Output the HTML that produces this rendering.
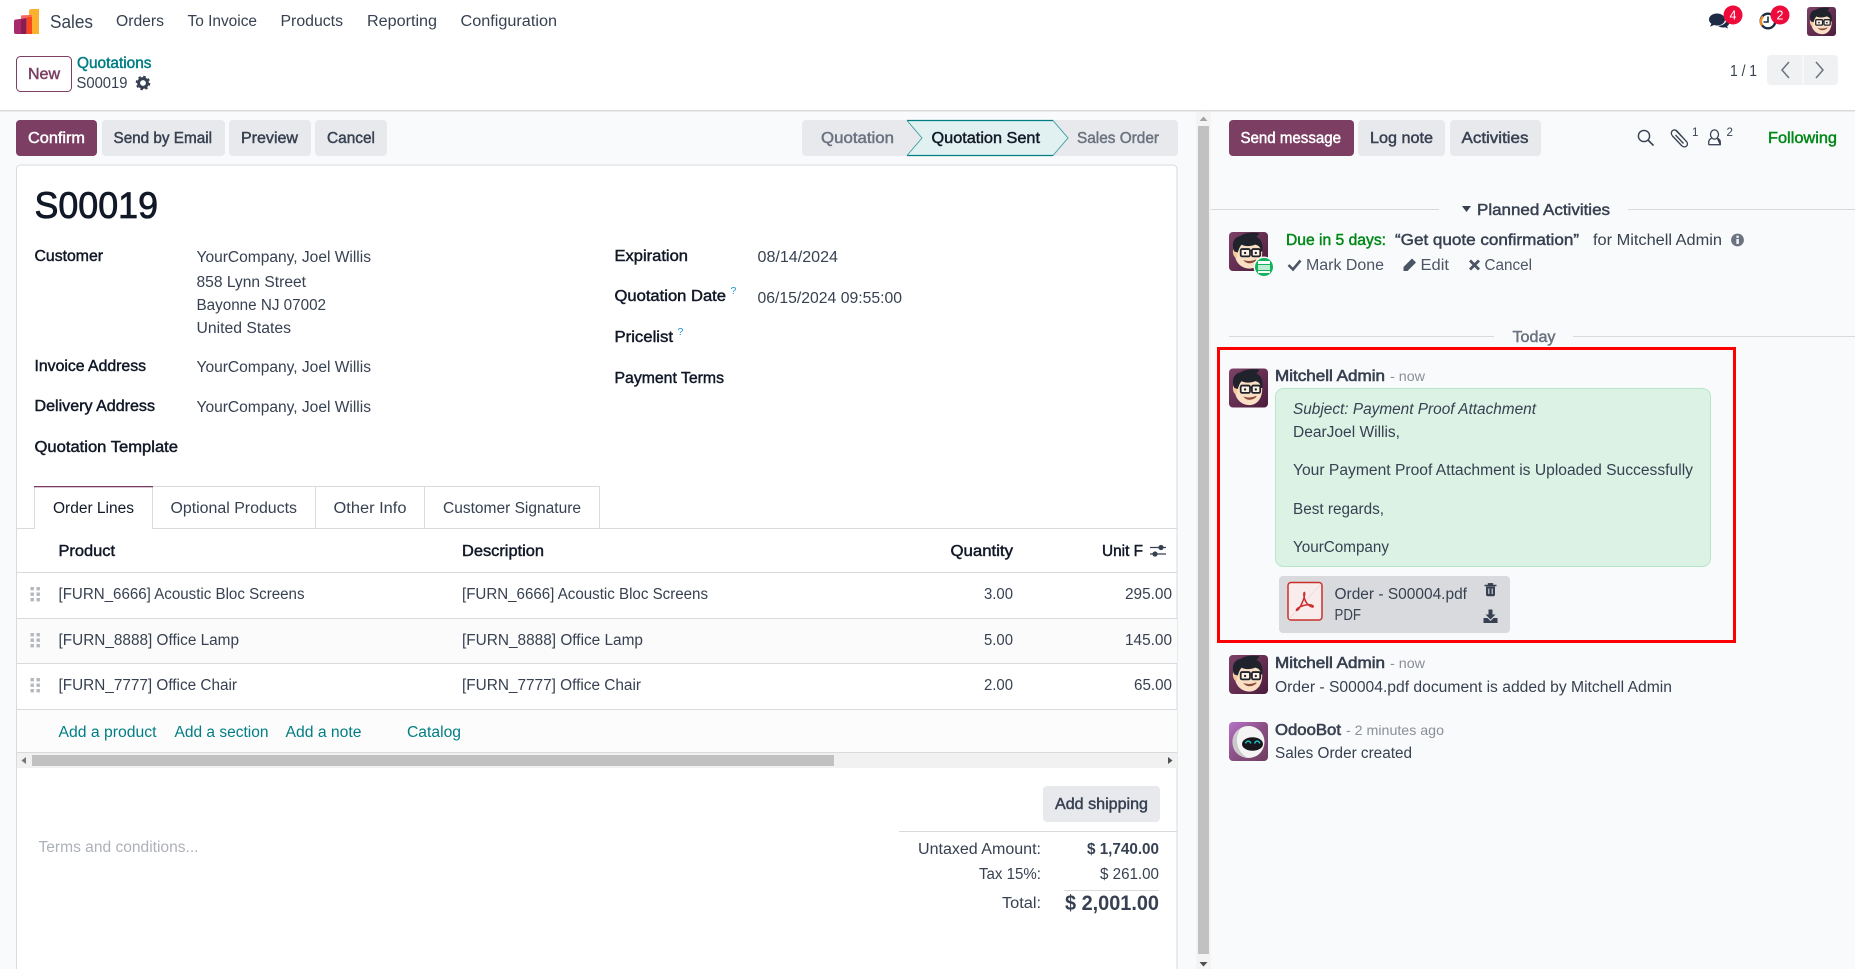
<!DOCTYPE html>
<html lang="en"><head><meta charset="utf-8"><title>S00019 - Sales</title>
<style>
html,body{margin:0;padding:0;width:1855px;height:969px;overflow:hidden;background:#f9fafb}
svg{display:block}
text{font-family:"Liberation Sans",sans-serif;font-size:15.4px;fill:currentColor;color:#374151;white-space:pre}
.m{stroke:currentColor;stroke-width:.45px}
.d{color:#111827}
.g{color:#6b7280}
.t{color:#017e84}
.w{color:#fff}
.gr{color:#008818}
.mu{color:#8b8f98}
</style></head><body>
<svg xmlns="http://www.w3.org/2000/svg" width="1855" height="969" viewBox="0 0 1855 969">
<defs>
<linearGradient id="av" x1="0" y1="0" x2="1" y2="1"><stop offset="0" stop-color="#7d4168"/><stop offset="1" stop-color="#4c1c3c"/></linearGradient>
<linearGradient id="ob" x1="0" y1="0" x2="1" y2="1"><stop offset="0" stop-color="#b673c8"/><stop offset=".5" stop-color="#8a4f84"/><stop offset="1" stop-color="#6e3f60"/></linearGradient>
<symbol id="face" viewBox="0 0 40 40">
<rect width="40" height="40" rx="4" fill="url(#av)"/>
<path d="M6 20C5 30 12 37.500 21 37.500C29 37.500 34.500 30 34 20L32 12L10 12Z" fill="#f9dfc4"/>
<path d="M5 17C3 19 4 26 8 27L9 19Z" fill="#f3c9a0"/>
<path d="M5.500 20C2 12 5 5 12 4C15 1 24 0 31 1C30 3 30 4 28 5C33 7 35.500 13 34 20L32.500 20C32.500 15 30 14 27 13C22 15 16 15 13 13C11 15 10 18 9 21Z" fill="#20232b"/>
<rect x="12" y="17.500" width="9.500" height="7.500" rx="1.500" fill="#fff" fill-opacity=".55" stroke="#20232b" stroke-width="1.800"/>
<rect x="23.500" y="17.500" width="8.500" height="7.500" rx="1.500" fill="#fff" fill-opacity=".55" stroke="#20232b" stroke-width="1.800"/>
<path d="M21.500 19.500H23.500" stroke="#20232b" stroke-width="1.500"/>
<circle cx="16.500" cy="21.500" r="1.200" fill="#20232b"/><circle cx="27.500" cy="21.500" r="1.200" fill="#20232b"/>
<path d="M16 29.500C19 32.500 24 32.500 28 28.500C24 30.500 20 30.500 16 29.500Z" fill="#8a4a3a" stroke="#8a4a3a" stroke-width=".9"/>
</symbol>
</defs>

<!-- top white area -->
<rect width="1855" height="110" fill="#fff"/>
<rect y="110" width="1855" height="1.500" fill="#d8dadd"/>

<!-- logo -->
<path d="M29 11.500Q29 9 31.500 9H39V34H31.500Q29 34 29 31.500Z" fill="#fbb130"/>
<path d="M21 15.500Q25 15 32 15V34H21Z" fill="#f9695e"/>
<path d="M27 17H32V34H27Z" fill="#f9461c"/>
<path d="M14 21.500Q14 19.500 16 19.500L26.500 18V34H16Q14 34 14 32Z" fill="#a8296c"/>
<path d="M21 20V34H26.500V18Z" fill="#8a1c4f"/>

<!-- nav -->
<text x="50" y="28" textLength="43" lengthAdjust="spacingAndGlyphs" style="font-size:18.500px">Sales</text>
<text x="116" y="26" textLength="48" lengthAdjust="spacingAndGlyphs">Orders</text>
<text x="187.500" y="26" textLength="69.500" lengthAdjust="spacingAndGlyphs">To Invoice</text>
<text x="280.500" y="26" textLength="62.500" lengthAdjust="spacingAndGlyphs">Products</text>
<text x="367" y="26" textLength="70" lengthAdjust="spacingAndGlyphs">Reporting</text>
<text x="460.500" y="26" textLength="96.500" lengthAdjust="spacingAndGlyphs">Configuration</text>

<!-- systray -->
<path d="M1717 13.500c-4.500 0-8 2.700-8 6 0 1.700.9 3.200 2.400 4.300l-1.400 3 4-1.800c1 .3 2 .5 3 .5 4.500 0 8-2.700 8-6s-3.500-6-8-6z" fill="#1d2b45"/>
<path d="M1727 19c-.3 3.700-4 6.700-9 6.900 1.200 1 2.900 1.600 4.800 1.600.8 0 1.600-.1 2.300-.3l2.900 1.300-.9-2.300c1.500-1 2.400-2.400 2.400-4 0-1-.9-2-2.500-3.200z" fill="#1d2b45"/>
<circle cx="1733" cy="15" r="9.500" fill="#ef0a3c"/>
<text x="1733" y="19.500" text-anchor="middle" class="w" style="font-size:12.500px">4</text>
<circle cx="1768" cy="21" r="7.300" fill="none" stroke="#1d2b45" stroke-width="2.400"/>
<path d="M1763 16.500a7.300 7.300 0 0 0-1 9" fill="none" stroke="#e8902c" stroke-width="2.400"/>
<path d="M1768 16.500V22H1763.500" fill="none" stroke="#1d2b45" stroke-width="1.600"/>
<circle cx="1780" cy="15" r="9.500" fill="#ef0a3c"/>
<text x="1780" y="19.500" text-anchor="middle" class="w" style="font-size:12.500px">2</text>
<use href="#face" x="1807" y="7" width="29" height="29"/>

<!-- control panel left -->
<rect x="16.500" y="56.500" width="55" height="35" rx="4" fill="#fff" stroke="#7c3e63"/>
<text x="28" y="79" textLength="32" lengthAdjust="spacingAndGlyphs" class="m" style="color:#7c3e63">New</text>
<text x="77" y="68" textLength="74.500" lengthAdjust="spacingAndGlyphs" class="m t">Quotations</text>
<text x="76.500" y="88" textLength="51" lengthAdjust="spacingAndGlyphs">S00019</text>
<g transform="translate(143 83)" fill="#374151">
<circle r="4.400" fill="none" stroke="#374151" stroke-width="3"/>
<circle r="6.200" fill="none" stroke="#374151" stroke-width="2.200" stroke-dasharray="2.500 2.370"/>
</g>

<!-- pager -->
<text x="1730" y="76" textLength="27" lengthAdjust="spacingAndGlyphs">1 / 1</text>
<rect x="1767" y="55" width="71" height="30" rx="4" fill="#f0f1f3"/>
<rect x="1802.500" y="55" width="1" height="30" fill="#fff"/>
<path d="M1789 62l-7 8 7 8M1816 62l7 8-7 8" fill="none" stroke="#6b7280" stroke-width="1.500"/>

<!-- action buttons -->
<rect x="16" y="120" width="81" height="36" rx="4" fill="#7c3e63"/>
<text x="28" y="143" textLength="57" lengthAdjust="spacingAndGlyphs" class="m w">Confirm</text>
<rect x="102" y="120" width="123" height="36" rx="4" fill="#e7e9ed"/>
<text x="113.500" y="143" textLength="98.500" lengthAdjust="spacingAndGlyphs" class="m">Send by Email</text>
<rect x="229" y="120" width="82" height="36" rx="4" fill="#e7e9ed"/>
<text x="241" y="143" textLength="57" lengthAdjust="spacingAndGlyphs" class="m">Preview</text>
<rect x="315" y="120" width="72" height="36" rx="4" fill="#e7e9ed"/>
<text x="327" y="143" textLength="48" lengthAdjust="spacingAndGlyphs" class="m">Cancel</text>

<!-- statusbar -->
<rect x="802" y="120" width="376" height="36" rx="4" fill="#e7e9ed"/>
<path d="M907 120.500H1053L1068 138L1053 155.500H907L922 138Z" fill="#e1f1f1"/>
<path d="M907 120.500H1053M907 155.500H1053" stroke="#017e84" stroke-width="1.300"/>
<path d="M907 120.500L922 138L907 155.500M1053 120.500L1068 138L1053 155.500" fill="none" stroke="#3a9ca0" stroke-width=".9"/>
<text x="821" y="143" textLength="73" lengthAdjust="spacingAndGlyphs" class="m g">Quotation</text>
<text x="931.500" y="143" textLength="108.500" lengthAdjust="spacingAndGlyphs" class="m d">Quotation Sent</text>
<text x="1077" y="143" textLength="82" lengthAdjust="spacingAndGlyphs" class="m g">Sales Order</text>

<!-- sheet -->
<path d="M16.500 980V169a4 4 0 0 1 4-4H1173a4 4 0 0 1 4 4V980Z" fill="#fff" stroke="#d8dadd"/>
<text x="34.500" y="218" textLength="123.500" lengthAdjust="spacingAndGlyphs" class="d" style="font-size:37.500px;stroke:currentColor;stroke-width:.8px">S00019</text>

<!-- fields -->
<text x="34.500" y="261" textLength="68.500" lengthAdjust="spacingAndGlyphs" class="m d">Customer</text>
<text x="196.500" y="262" textLength="174.500" lengthAdjust="spacingAndGlyphs">YourCompany, Joel Willis</text>
<text x="196.500" y="287" textLength="109.500" lengthAdjust="spacingAndGlyphs">858 Lynn Street</text>
<text x="196.500" y="310" textLength="129.500" lengthAdjust="spacingAndGlyphs">Bayonne NJ 07002</text>
<text x="196.500" y="333" textLength="94.500" lengthAdjust="spacingAndGlyphs">United States</text>
<text x="34.500" y="371" textLength="111.500" lengthAdjust="spacingAndGlyphs" class="m d">Invoice Address</text>
<text x="196.500" y="372" textLength="174.500" lengthAdjust="spacingAndGlyphs">YourCompany, Joel Willis</text>
<text x="34.500" y="411" textLength="120.500" lengthAdjust="spacingAndGlyphs" class="m d">Delivery Address</text>
<text x="196.500" y="412" textLength="174.500" lengthAdjust="spacingAndGlyphs">YourCompany, Joel Willis</text>
<text x="34.500" y="452" textLength="143.500" lengthAdjust="spacingAndGlyphs" class="m d">Quotation Template</text>

<text x="614.500" y="261" textLength="73.500" lengthAdjust="spacingAndGlyphs" class="m d">Expiration</text>
<text x="757.500" y="262" textLength="80.500" lengthAdjust="spacingAndGlyphs">08/14/2024</text>
<text x="614.500" y="301" textLength="111.500" lengthAdjust="spacingAndGlyphs" class="m d">Quotation Date</text>
<text x="730.500" y="294" style="font-size:10.500px;color:#1d96c4">?</text>
<text x="757.500" y="303" textLength="144.500" lengthAdjust="spacingAndGlyphs">06/15/2024 09:55:00</text>
<text x="614.500" y="342" textLength="58.500" lengthAdjust="spacingAndGlyphs" class="m d">Pricelist</text>
<text x="677.500" y="335" style="font-size:10.500px;color:#1d96c4">?</text>
<text x="614.500" y="383" textLength="109.500" lengthAdjust="spacingAndGlyphs" class="m d">Payment Terms</text>

<!-- tabs -->
<rect x="17" y="528" width="1160" height="1" fill="#d8dadd"/>
<path d="M152.500 528V486.500H599.500V528M315.500 486.500V528M424.500 486.500V528" fill="none" stroke="#d8dadd"/>
<rect x="34" y="487" width="118" height="42.500" fill="#fff"/>
<path d="M34.500 529V487M152.500 487V529" stroke="#d8dadd" fill="none"/>
<rect x="34" y="486" width="119" height="1.300" fill="#7c3e63"/>
<text x="53" y="513" textLength="81" lengthAdjust="spacingAndGlyphs" class="d">Order Lines</text>
<text x="170.500" y="513" textLength="126.500" lengthAdjust="spacingAndGlyphs">Optional Products</text>
<text x="333.500" y="513" textLength="73" lengthAdjust="spacingAndGlyphs">Other Info</text>
<text x="443" y="513" textLength="138" lengthAdjust="spacingAndGlyphs">Customer Signature</text>

<!-- table -->
<rect x="17" y="618.500" width="1160" height="44.500" fill="#fbfbfb"/>
<rect x="17" y="709.500" width="1160" height="43" fill="#fcfcfc"/>
<g fill="#d8dadd">
<rect x="17" y="572" width="1160" height="1"/>
<rect x="17" y="618" width="1160" height="1"/>
<rect x="17" y="663" width="1160" height="1"/>
<rect x="17" y="709" width="1160" height="1"/>
<rect x="17" y="752" width="1160" height="1"/>
</g>
<text x="58.500" y="556" textLength="56.500" lengthAdjust="spacingAndGlyphs" class="m d">Product</text>
<text x="462" y="556" textLength="82" lengthAdjust="spacingAndGlyphs" class="m d">Description</text>
<text x="950.500" y="556" textLength="62.500" lengthAdjust="spacingAndGlyphs" class="m d">Quantity</text>
<text x="1102" y="556" textLength="41" lengthAdjust="spacingAndGlyphs" class="m d">Unit F</text>
<path d="M1150 547.500H1166M1150 554H1166" stroke="#374151" stroke-width="1.300"/>
<circle cx="1161" cy="547.500" r="2.600" fill="#374151"/><circle cx="1155" cy="554" r="2.600" fill="#374151"/>

<g fill="#b4b7bd">
<rect x="30.500" y="587" width="3.400" height="3.400"/><rect x="36.500" y="587" width="3.400" height="3.400"/><rect x="30.500" y="592.500" width="3.400" height="3.400"/><rect x="36.500" y="592.500" width="3.400" height="3.400"/><rect x="30.500" y="598" width="3.400" height="3.400"/><rect x="36.500" y="598" width="3.400" height="3.400"/>
<rect x="30.500" y="633" width="3.400" height="3.400"/><rect x="36.500" y="633" width="3.400" height="3.400"/><rect x="30.500" y="638.500" width="3.400" height="3.400"/><rect x="36.500" y="638.500" width="3.400" height="3.400"/><rect x="30.500" y="644" width="3.400" height="3.400"/><rect x="36.500" y="644" width="3.400" height="3.400"/>
<rect x="30.500" y="678" width="3.400" height="3.400"/><rect x="36.500" y="678" width="3.400" height="3.400"/><rect x="30.500" y="683.500" width="3.400" height="3.400"/><rect x="36.500" y="683.500" width="3.400" height="3.400"/><rect x="30.500" y="689" width="3.400" height="3.400"/><rect x="36.500" y="689" width="3.400" height="3.400"/>
</g>

<text x="58.500" y="599" textLength="246" lengthAdjust="spacingAndGlyphs">[FURN_6666] Acoustic Bloc Screens</text>
<text x="462" y="599" textLength="246" lengthAdjust="spacingAndGlyphs">[FURN_6666] Acoustic Bloc Screens</text>
<text x="984" y="599" textLength="29" lengthAdjust="spacingAndGlyphs">3.00</text>
<text x="1125" y="599" textLength="47" lengthAdjust="spacingAndGlyphs">295.00</text>
<text x="58.500" y="645" textLength="180.500" lengthAdjust="spacingAndGlyphs">[FURN_8888] Office Lamp</text>
<text x="462" y="645" textLength="181" lengthAdjust="spacingAndGlyphs">[FURN_8888] Office Lamp</text>
<text x="984" y="645" textLength="29" lengthAdjust="spacingAndGlyphs">5.00</text>
<text x="1125" y="645" textLength="47" lengthAdjust="spacingAndGlyphs">145.00</text>
<text x="58.500" y="690" textLength="178.500" lengthAdjust="spacingAndGlyphs">[FURN_7777] Office Chair</text>
<text x="462" y="690" textLength="179" lengthAdjust="spacingAndGlyphs">[FURN_7777] Office Chair</text>
<text x="984" y="690" textLength="29" lengthAdjust="spacingAndGlyphs">2.00</text>
<text x="1134" y="690" textLength="38" lengthAdjust="spacingAndGlyphs">65.00</text>

<text x="58.500" y="737" textLength="98" lengthAdjust="spacingAndGlyphs" class="t">Add a product</text>
<text x="174.500" y="737" textLength="94" lengthAdjust="spacingAndGlyphs" class="t">Add a section</text>
<text x="285.500" y="737" textLength="76" lengthAdjust="spacingAndGlyphs" class="t">Add a note</text>
<text x="407" y="737" textLength="54" lengthAdjust="spacingAndGlyphs" class="t">Catalog</text>

<!-- h scrollbar -->
<rect x="17" y="753" width="1160" height="15" fill="#f1f1f1"/>
<rect x="32" y="755" width="802" height="11" fill="#c1c1c1"/>
<path d="M26 757V764L21.500 760.500Z" fill="#757575"/>
<path d="M1168 757V764L1172.500 760.500Z" fill="#505050"/>

<!-- totals -->
<rect x="1043" y="786" width="117" height="36" rx="4" fill="#e7e9ed"/>
<text x="1055" y="809" textLength="93" lengthAdjust="spacingAndGlyphs" class="m">Add shipping</text>
<rect x="899" y="831" width="278" height="1" fill="#d8dadd"/>
<text x="38.500" y="852" textLength="160" lengthAdjust="spacingAndGlyphs" style="color:#adb1b8">Terms and conditions...</text>
<text x="918" y="854" textLength="123" lengthAdjust="spacingAndGlyphs">Untaxed Amount:</text>
<text x="1087" y="854" textLength="72" lengthAdjust="spacingAndGlyphs" style="font-weight:700">$ 1,740.00</text>
<text x="979" y="879" textLength="62" lengthAdjust="spacingAndGlyphs">Tax 15%:</text>
<text x="1100" y="879" textLength="59" lengthAdjust="spacingAndGlyphs">$ 261.00</text>
<rect x="1064" y="890" width="95" height="1" fill="#d8dadd"/>
<text x="1002" y="908" textLength="39" lengthAdjust="spacingAndGlyphs">Total:</text>
<text x="1065" y="910" textLength="94" lengthAdjust="spacingAndGlyphs" style="font-size:21px;font-weight:700">$ 2,001.00</text>

<!-- v scrollbar -->
<rect x="1196" y="111.500" width="15" height="858" fill="#f4f4f5"/>
<rect x="1198" y="126" width="11" height="828" fill="#c1c1c1"/>
<path d="M1199.500 121L1203.500 116.500L1207.500 121Z" fill="#a3a3a3"/>
<path d="M1199.500 962L1203.500 966.500L1207.500 962Z" fill="#505050"/>

<!-- chatter buttons -->
<rect x="1229" y="120" width="125" height="36" rx="4" fill="#7c3e63"/>
<text x="1240.500" y="143" textLength="100.500" lengthAdjust="spacingAndGlyphs" class="m w">Send message</text>
<rect x="1358" y="120" width="87" height="36" rx="4" fill="#e7e9ed"/>
<text x="1370" y="143" textLength="63" lengthAdjust="spacingAndGlyphs" class="m">Log note</text>
<rect x="1450" y="120" width="91" height="36" rx="4" fill="#e7e9ed"/>
<text x="1461.500" y="143" textLength="67" lengthAdjust="spacingAndGlyphs" class="m">Activities</text>

<circle cx="1644" cy="136" r="5.600" fill="none" stroke="#374151" stroke-width="1.400"/>
<path d="M1648 140L1653.500 145.500" stroke="#374151" stroke-width="1.600"/>
<path d="M1676 130.500L1686.500 141.500C1689.500 145 1685 149 1681.500 145.500L1672.500 136C1669 132 1674 127.500 1677.500 131.500L1686 141M1675.500 135L1683.500 143.500" fill="none" stroke="#374151" stroke-width="1.300"/>
<text x="1692" y="136" style="font-size:11.500px">1</text>
<ellipse cx="1714.500" cy="134.500" rx="4" ry="4.600" fill="none" stroke="#374151" stroke-width="1.300"/>
<path d="M1708.700 144.700V142.500C1708.700 139.800 1710 138.900 1711.500 138.400M1717.500 138.400C1719 138.900 1720.300 139.800 1720.300 142.500V144.700Z" fill="none" stroke="#374151" stroke-width="1.300" stroke-linejoin="round"/>
<path d="M1708.700 144.700H1720.300" stroke="#374151" stroke-width="1.300"/>
<text x="1726.500" y="136" style="font-size:11.500px">2</text>
<text x="1768" y="143" textLength="69" lengthAdjust="spacingAndGlyphs" class="m gr">Following</text>

<!-- planned activities -->
<rect x="1211" y="209" width="228" height="1" fill="#d8dadd"/>
<rect x="1628" y="209" width="227" height="1" fill="#d8dadd"/>
<path d="M1462 206H1471L1466.500 212Z" fill="#374151"/>
<text x="1477" y="215" textLength="133" lengthAdjust="spacingAndGlyphs" class="m">Planned Activities</text>

<use href="#face" x="1229" y="232" width="39" height="39"/>
<circle cx="1264" cy="267" r="10.500" fill="#f9fafb"/>
<circle cx="1264" cy="267" r="9" fill="#11b35c"/>
<rect x="1258" y="261" width="12" height="3" fill="#fff"/>
<rect x="1258" y="265" width="12" height="5" fill="#b9ecd0"/>
<rect x="1258" y="271" width="12" height="2" fill="#fff"/>

<text x="1286" y="245" textLength="100" lengthAdjust="spacingAndGlyphs" class="m gr">Due in 5 days:</text>
<text x="1395" y="245" textLength="184" lengthAdjust="spacingAndGlyphs" class="m">“Get quote confirmation”</text>
<text x="1593" y="245" textLength="129" lengthAdjust="spacingAndGlyphs">for Mitchell Admin</text>
<circle cx="1737.500" cy="240" r="6.400" fill="#6b7280"/>
<rect x="1736.400" y="239" width="2.400" height="5" fill="#f9fafb"/><rect x="1736.400" y="235.700" width="2.400" height="2.200" fill="#f9fafb"/>

<path d="M1288.500 265L1293 269.500L1300.500 260.500" fill="none" stroke="#4b5563" stroke-width="2.600"/>
<text x="1306" y="270" textLength="78" lengthAdjust="spacingAndGlyphs" style="color:#4b5563">Mark Done</text>
<path d="M1403.500 267V271H1407.500L1416 262.500L1412 258.500Z" fill="#4b5563"/>
<text x="1420.500" y="270" textLength="28.500" lengthAdjust="spacingAndGlyphs" style="color:#4b5563">Edit</text>
<path d="M1470 260.500L1479 269.500M1479 260.500L1470 269.500" stroke="#4b5563" stroke-width="2.800"/>
<text x="1484.500" y="270" textLength="47.500" lengthAdjust="spacingAndGlyphs" style="color:#4b5563">Cancel</text>

<!-- today -->
<rect x="1229" y="336" width="265" height="1" fill="#d8dadd"/>
<rect x="1573" y="336" width="282" height="1" fill="#d8dadd"/>
<text x="1512.500" y="342" textLength="43" lengthAdjust="spacingAndGlyphs" class="m g">Today</text>

<!-- message 1 -->
<rect x="1218.500" y="348.500" width="516" height="293" fill="none" stroke="#f00" stroke-width="3"/>
<use href="#face" x="1229" y="368" width="39" height="40"/>
<text x="1275" y="381" textLength="110" lengthAdjust="spacingAndGlyphs" class="m" style="stroke-width:.6px">Mitchell Admin</text>
<text x="1390" y="381" textLength="35" lengthAdjust="spacingAndGlyphs" style="font-size:14px" class="mu">- now</text>
<rect x="1275.500" y="388.500" width="435" height="178" rx="8" fill="#dcf2e5" stroke="#b7e6ca"/>
<text x="1293" y="414" textLength="243" lengthAdjust="spacingAndGlyphs" style="font-style:italic">Subject: Payment Proof Attachment</text>
<text x="1293" y="437" textLength="107" lengthAdjust="spacingAndGlyphs">DearJoel Willis,</text>
<text x="1293" y="475" textLength="400" lengthAdjust="spacingAndGlyphs">Your Payment Proof Attachment is Uploaded Successfully</text>
<text x="1293" y="514" textLength="91" lengthAdjust="spacingAndGlyphs">Best regards,</text>
<text x="1293" y="552" textLength="96" lengthAdjust="spacingAndGlyphs">YourCompany</text>

<rect x="1279" y="576" width="231" height="57" rx="4" fill="#d9dade"/>
<rect x="1288" y="582.500" width="34" height="37.500" rx="3" fill="#f9ecec" stroke="#c9302c" stroke-width="1.500"/>
<path d="M1289 619L1321 584" stroke="#ecd9d9" stroke-width=".8"/>
<path d="M1304.500 592.500C1303.500 592.500 1303.500 596 1305 600C1306.500 604 1311 607.500 1313 607C1314 606 1312 604.500 1307.500 604.800C1303 605.200 1297.500 607.500 1296.500 609.700C1296 611 1297.500 610.500 1299 608.500C1301.500 605 1305.500 596 1304.500 592.500Z" fill="none" stroke="#c9302c" stroke-width="1.500"/>
<text x="1334.500" y="599" textLength="132.500" lengthAdjust="spacingAndGlyphs">Order - S00004.pdf</text>
<text x="1334.500" y="620" textLength="26.500" lengthAdjust="spacingAndGlyphs" style="font-size:15.400px">PDF</text>
<path d="M1484.500 585.500H1496.500M1488.500 585.500V583.300H1492.500V585.500M1486 586.500V594.500Q1486 596.300 1488 596.300H1493Q1495 596.300 1495 594.500V586.500Z" fill="#374151"/>
<path d="M1484.500 585.500H1496.500M1488.500 585.500V583.800H1492.500V585.500" fill="none" stroke="#374151" stroke-width="1.400"/>
<path d="M1488.800 588.500V594M1492.200 588.500V594" stroke="#d9dade" stroke-width="1.100"/>
<path d="M1488.500 609.500H1492.500V614.500H1495.500L1490.500 619.500L1485.500 614.500H1488.500Z" fill="#374151"/>
<path d="M1483.500 618H1487.500L1490.500 621L1493.500 618H1497.500V623H1483.500Z" fill="#374151"/>

<!-- message 2 -->
<use href="#face" x="1229" y="655" width="39" height="39"/>
<text x="1275" y="668" textLength="110" lengthAdjust="spacingAndGlyphs" class="m" style="stroke-width:.6px">Mitchell Admin</text>
<text x="1390" y="668" textLength="35" lengthAdjust="spacingAndGlyphs" style="font-size:14px" class="mu">- now</text>
<text x="1275" y="692" textLength="397" lengthAdjust="spacingAndGlyphs">Order - S00004.pdf document is added by Mitchell Admin</text>

<!-- message 3 -->
<rect x="1229" y="722" width="39" height="39" rx="4" fill="url(#ob)"/>
<circle cx="1248.500" cy="742" r="16" fill="#f4f4f4"/>
<path d="M1233 746C1234 752 1240 757.500 1248 758C1242 755 1238 750 1237 742C1236.500 737 1238 732 1241 728C1236 731 1231.500 738 1233 746Z" fill="#c9c9c9"/>
<ellipse cx="1252.500" cy="744" rx="10.500" ry="6.800" fill="#17171d"/>
<path d="M1245.800 743.500a2.400 2.400 0 0 1 4.800 0M1254.800 743.500a2.400 2.400 0 0 1 4.800 0" fill="none" stroke="#1ec1c1" stroke-width="1.500"/>
<text x="1275" y="735" textLength="66" lengthAdjust="spacingAndGlyphs" class="m" style="stroke-width:.6px">OdooBot</text>
<text x="1346" y="735" textLength="98" lengthAdjust="spacingAndGlyphs" style="font-size:14px" class="mu">- 2 minutes ago</text>
<text x="1275" y="758" textLength="137" lengthAdjust="spacingAndGlyphs">Sales Order created</text>
</svg>
</body></html>
